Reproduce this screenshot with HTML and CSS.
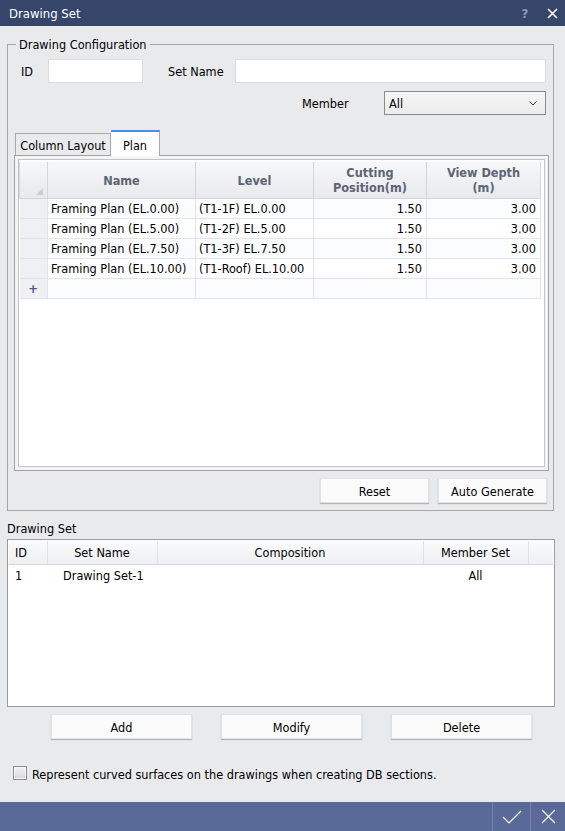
FILE: index.html
```html
<!DOCTYPE html>
<html>
<head>
<meta charset="utf-8">
<link rel="stylesheet" href="styles.css">
</head>
<body>
<div class="titlebar">
  <div class="title">Drawing Set</div>
  <div class="tb-btn help">?</div>
  <div class="tb-btn close">
    <svg width="11" height="11" viewBox="0 0 11 11"><path d="M1 1L10 10M10 1L1 10" stroke="#fff" stroke-width="1.6" fill="none"/></svg>
  </div>
</div>

<fieldset class="config">
  <legend>Drawing Configuration</legend>
  <div class="row1">
    <span class="lbl-id">ID</span>
    <div class="input id-input"></div>
    <span class="lbl-name">Set Name</span>
    <div class="input name-input"></div>
  </div>
  <div class="row2">
    <span class="lbl-member">Member</span>
    <div class="select">
      <span>All</span>
      <svg width="8" height="5" viewBox="0 0 8 5"><polyline points="0.5,0.5 4,4 7.5,0.5" stroke="#333" stroke-width="1" fill="none"/></svg>
    </div>
  </div>
  <div class="tabs">
    <div class="tab">Column Layout</div>
    <div class="tab active">Plan</div>
  </div>
  <div class="panel">
    <div class="grid-wrap">
      <table class="grid">
        <colgroup><col class="c0"><col class="c1"><col class="c2"><col class="c3"><col class="c4"></colgroup>
        <thead>
          <tr>
            <th class="corner"><svg width="7" height="7" viewBox="0 0 7 7"><polygon points="7,0 7,7 0,7" fill="#c9cbcf"/></svg></th>
            <th>Name</th>
            <th>Level</th>
            <th>Cutting<br>Position(m)</th>
            <th>View Depth<br>(m)</th>
          </tr>
        </thead>
        <tbody>
          <tr><td class="ind"></td><td>Framing Plan (EL.0.00)</td><td>(T1-1F) EL.0.00</td><td class="num">1.50</td><td class="num">3.00</td></tr>
          <tr><td class="ind"></td><td>Framing Plan (EL.5.00)</td><td>(T1-2F) EL.5.00</td><td class="num">1.50</td><td class="num">3.00</td></tr>
          <tr><td class="ind"></td><td>Framing Plan (EL.7.50)</td><td>(T1-3F) EL.7.50</td><td class="num">1.50</td><td class="num">3.00</td></tr>
          <tr><td class="ind"></td><td>Framing Plan (EL.10.00)</td><td>(T1-Roof) EL.10.00</td><td class="num">1.50</td><td class="num">3.00</td></tr>
          <tr class="newrow"><td class="ind plus">+</td><td></td><td></td><td></td><td></td></tr>
        </tbody>
      </table>
    </div>
  </div>
  <div class="cfg-buttons">
    <div class="btn w109">Reset</div>
    <div class="btn w109">Auto Generate</div>
  </div>
</fieldset>

<div class="section-label">Drawing Set</div>
<div class="list">
  <table class="list-table">
    <colgroup><col class="l0"><col class="l1"><col class="l2"><col class="l3"><col class="l4"></colgroup>
    <thead>
      <tr><th class="left">ID</th><th>Set Name</th><th>Composition</th><th>Member Set</th><th></th></tr>
    </thead>
    <tbody>
      <tr><td class="left">1</td><td class="setname">Drawing Set-1</td><td></td><td class="center">All</td><td></td></tr>
    </tbody>
  </table>
</div>

<div class="list-buttons">
  <div class="btn w141">Add</div>
  <div class="btn w141">Modify</div>
  <div class="btn w141">Delete</div>
</div>

<div class="check-row">
  <div class="checkbox"></div>
  <span>Represent curved surfaces on the drawings when creating DB sections.</span>
</div>

<div class="footer">
  <div class="f-btn ok">
    <svg width="20" height="14" viewBox="0 0 20 14"><polyline points="1,7 7,13 19,1" stroke="#fff" stroke-width="1.2" fill="none"/></svg>
  </div>
  <div class="f-btn cancel">
    <svg width="15" height="15" viewBox="0 0 15 15"><path d="M1 1L14 14M14 1L1 14" stroke="#fff" stroke-width="1.2" fill="none"/></svg>
  </div>
</div>
</body>
</html>
```
FILE: styles.css
```css
* { box-sizing: border-box; }
html, body { margin: 0; padding: 0; }
body {
  width: 565px;
  height: 831px;
  overflow: hidden;
  background: #e9eaec;
  font-family: "DejaVu Sans Condensed", "DejaVu Sans", sans-serif;
  font-stretch: condensed;
  font-size: 12.6px;
  color: #000;
  display: flex;
  flex-direction: column;
}

.titlebar {
  height: 26px;
  flex: none;
  background: #36456a;
  color: #fff;
  display: flex;
  align-items: center;
  padding-left: 9px;
  font-size: 13px;
}
.titlebar .title { flex: 1; padding-top: 1px; }
.tb-btn {
  width: 26px;
  height: 26px;
  display: flex;
  align-items: center;
  justify-content: center;
}
.tb-btn.help { color: #8e99b0; font-weight: bold; font-size: 13px; margin-right: 1px; }

.config {
  flex: none;
  margin: 11px 11px 0 7px;
  padding: 0 0 7px 0;
  border: 1px solid #a6a6a6;
  min-width: 0;
  width: 547px;
}
.config legend {
  margin-left: 8px;
  padding: 0 3px;
  line-height: 15px;
}

.row1 {
  display: flex;
  align-items: center;
  height: 24px;
  margin-top: 7px;
  padding: 0 7px 0 13px;
}
.row1 span, .row2 span, .tab, .btn, .list-table th, .list-table td { padding-top: 1px; }
.lbl-id { width: 27px; }
.input {
  height: 24px;
  background: #fff;
  border: 1px solid #dcdde0;
}
.id-input { width: 95px; }
.lbl-name { width: 67px; margin-left: 25px; }
.name-input { flex: 1; }

.row2 {
  display: flex;
  align-items: center;
  justify-content: flex-end;
  height: 24px;
  margin-top: 8px;
  padding-right: 7px;
}
.lbl-member { width: 82px; }
.select {
  width: 162px;
  height: 24px;
  border: 1px solid #8b8b8b;
  background: linear-gradient(#f7f7f7, #ececec);
  display: flex;
  align-items: center;
  justify-content: space-between;
  padding: 0 8px 0 4px;
}

.tabs {
  display: flex;
  align-items: flex-end;
  height: 24px;
  margin-top: 16px;
  padding-left: 7px;
  position: relative;
  z-index: 1;
}
.tab {
  height: 22px;
  width: 96px;
  border: 1px solid #a8a8a8;
  border-bottom: none;
  background: #e9eaec;
  display: flex;
  align-items: center;
  justify-content: center;
}
.tab.active {
  height: 26px;
  width: 49px;
  margin-bottom: -1px;
  border-left: none;
  border-top: 2px solid #4b8bec;
  background: #fff;
  padding-top: 2px;
}

.panel {
  height: 316px;
  margin: 0 4px 0 6px;
  border: 1px solid #a3a3a3;
  background: #f4f4f5;
  padding: 3px;
}
.grid-wrap {
  height: 100%;
  border: 1px solid #c3c4c7;
  background: #fff;
  padding-top: 2px;
}
.grid {
  border-collapse: collapse;
  table-layout: fixed;
  width: 521px;
}
.c0 { width: 28px; }
.c1 { width: 148px; }
.c2 { width: 118px; }
.c3 { width: 113px; }
.c4 { width: 114px; }
.grid th {
  height: 36px;
  padding: 1px 0 0 0;
  background: linear-gradient(#f6f7f9, #e7e9ed);
  border: 1px solid #d3d6dc;
  border-top: none;
  color: #5d6473;
  font-weight: bold;
  line-height: 15px;
  text-align: center;
  vertical-align: middle;
}
.grid th.corner {
  text-align: right;
  vertical-align: bottom;
  padding: 0 4px 3px 0;
  line-height: 0;
}
.grid td {
  height: 20px;
  padding: 1px 4px 0 3px;
  border: 1px solid #e2e4e8;
  white-space: nowrap;
  overflow: hidden;
}
.grid tbody tr:nth-child(odd) td { background: #fbfcfd; }
.grid td.ind { background: #eff0f3 !important; border-left: none; }
.grid td.num { text-align: right; }
.grid td.plus {
  color: #4a5a8c;
  font-weight: bold;
  text-align: center;
  font-size: 13px;
  padding: 0;
}

.cfg-buttons {
  display: flex;
  justify-content: flex-end;
  gap: 9px;
  margin-top: 7px;
  padding-right: 6px;
}
.btn {
  height: 25px;
  background: #fbfbfb;
  border: 1px solid #e1e2e4;
  box-shadow: 0 1px 1px rgba(0, 0, 0, 0.22);
  display: flex;
  align-items: center;
  justify-content: center;
}
.w109 { width: 109px; }
.w141 { width: 141px; }

.section-label {
  flex: none;
  margin: 9px 0 0 7px;
  line-height: 16px;
  padding-top: 1px;
}

.list {
  flex: none;
  margin: 2px 10px 0 7px;
  height: 168px;
  border: 1px solid #9c9c9c;
  background: #fff;
  padding: 1px;
}
.list-table {
  border-collapse: collapse;
  table-layout: fixed;
  width: 544px;
}
.l0 { width: 38px; }
.l1 { width: 110px; }
.l2 { width: 266px; }
.l3 { width: 105px; }
.l4 { width: 25px; }
.list-table th {
  height: 23px;
  font-weight: normal;
  background: linear-gradient(#fafafb, #eef0f3);
  border-right: 1px solid #dfe1e5;
  border-bottom: 1px solid #d2d5da;
  text-align: center;
}
.list-table th:last-child { border-right: none; }
.list-table .left { text-align: left; padding-left: 6px; }
.list-table td {
  height: 23px;
  white-space: nowrap;
}
.list-table td.setname { padding-left: 16px; }
.list-table td.center { text-align: center; }

.list-buttons {
  flex: none;
  display: flex;
  gap: 29px;
  margin-top: 7px;
  padding-left: 51px;
}

.check-row {
  flex: none;
  display: flex;
  align-items: center;
  gap: 5px;
  margin-top: 26px;
  padding-left: 13px;
  height: 16px;
}
.check-row span { padding-top: 2px; }
.checkbox {
  width: 14px;
  height: 14px;
  border: 1px solid #8e8e8e;
  background: linear-gradient(#f2f2f2, #d9d9d9);
  box-shadow: inset 0 0 0 1px #f6f6f6;
}

.footer {
  flex: none;
  margin-top: auto;
  height: 29px;
  background: #5a6a98;
  display: flex;
  justify-content: flex-end;
}
.f-btn {
  display: flex;
  align-items: center;
  justify-content: center;
  border-left: 1px solid #7483ad;
}
.f-btn.ok { width: 38px; }
.f-btn.cancel { width: 35px; }
```
